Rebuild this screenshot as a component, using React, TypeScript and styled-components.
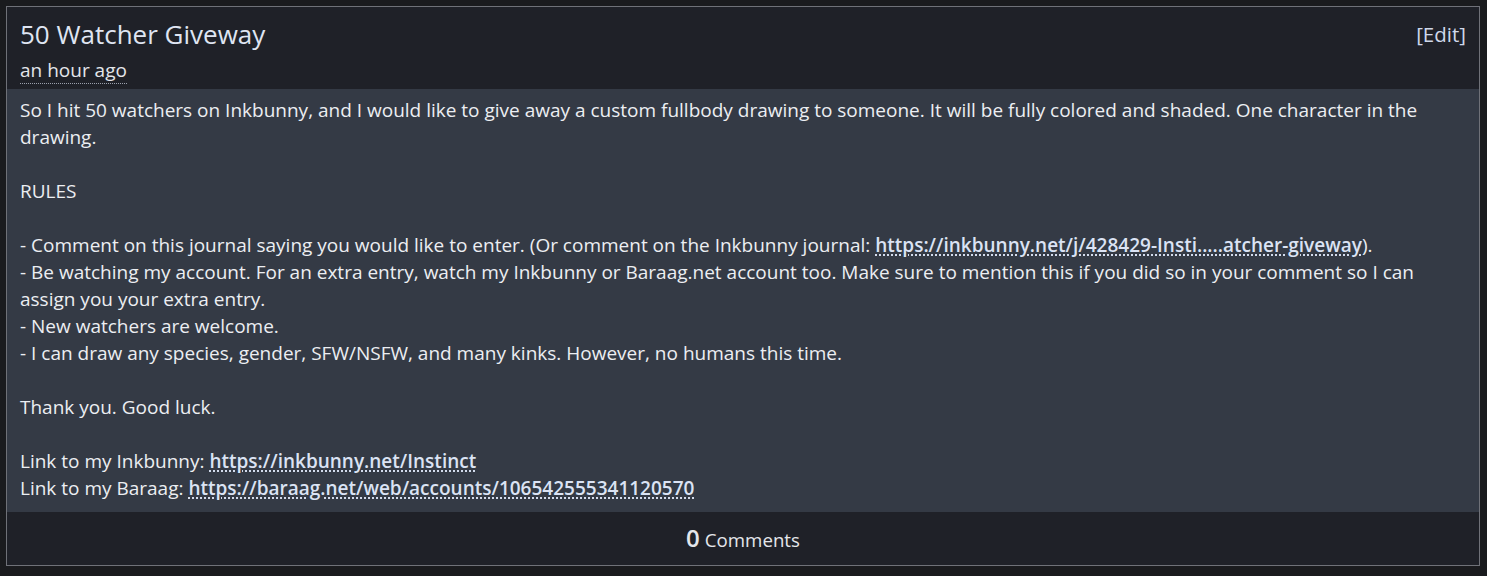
import React from "react";
import styled, { createGlobalStyle } from "styled-components";

const Global = createGlobalStyle`
  html, body { margin: 0; padding: 0; background: #1a1b1e; }
  body { font-family: "Open Sans", "Noto Sans", sans-serif; color: #e4e6eb; }
`;

const Page = styled.div`
  padding: 6px 7px 10px 6px;
`;

const Panel = styled.article`
  border: 1px solid #6f7178;
  background: #1f2128;
  display: flex;
  flex-direction: column;
`;

const Header = styled.header`
  display: flex;
  justify-content: space-between;
  align-items: flex-start;
  padding: 9px 13px 5px 13px;
`;

const TitleBlock = styled.div`
  display: flex;
  flex-direction: column;
`;

const Title = styled.h1`
  margin: 0;
  font-size: 26px;
  font-weight: 400;
  line-height: 36px;
  color: #dfe5f2;
`;

const Time = styled.span`
  align-self: flex-start;
  font-size: 19px;
  line-height: 26px;
  margin-top: 5px;
  color: #e4e6eb;
  border-bottom: 1px dotted #9aa0ad;
`;

const EditLink = styled.a`
  font-size: 20.5px;
  line-height: 30px;
  margin-top: 3px;
  color: #cfd8ea;
  text-decoration: none;
`;

const Body = styled.div`
  background: #343a45;
  padding: 8px 13px 10px 13px;
  font-size: 19px;
  line-height: 27px;
  color: #eceef2;
`;

const Link = styled.a`
  color: #dbe3f4;
  font-weight: 600;
  text-decoration: underline dotted;
  text-underline-offset: 3px;
`;

const Footer = styled.footer`
  display: flex;
  justify-content: center;
  align-items: baseline;
  gap: 5px;
  padding: 11px 0 12px;
  color: #e4e6eb;
`;

const Count = styled.span`
  font-size: 24px;
  font-weight: 600;
  line-height: 30px;
`;

const CountLabel = styled.span`
  font-size: 18.7px;
`;

export default function App() {
  return (
    <>
      <Global />
      <Page>
        <Panel>
          <Header>
            <TitleBlock>
              <Title>50 Watcher Giveway</Title>
              <Time>an hour ago</Time>
            </TitleBlock>
            <EditLink href="#">[Edit]</EditLink>
          </Header>
          <Body>
            So I hit 50 watchers on Inkbunny, and I would like to give away a custom fullbody drawing to someone. It will be fully colored and shaded. One character in the drawing.
            <br />
            <br />
            RULES
            <br />
            <br />
            - Comment on this journal saying you would like to enter. (Or comment on the Inkbunny journal:{" "}
            <Link href="#">https://inkbunny.net/j/428429-Insti.....atcher-giveway</Link>).
            <br />
            - Be watching my account. For an extra entry, watch my Inkbunny or Baraag.net account too. Make sure to mention this if you did so in your comment so I can assign you your extra entry.
            <br />
            - New watchers are welcome.
            <br />
            - I can draw any species, gender, SFW/NSFW, and many kinks. However, no humans this time.
            <br />
            <br />
            Thank you. Good luck.
            <br />
            <br />
            Link to my Inkbunny: <Link href="#">https://inkbunny.net/Instinct</Link>
            <br />
            Link to my Baraag: <Link href="#">https://baraag.net/web/accounts/106542555341120570</Link>
          </Body>
          <Footer>
            <Count>0</Count>
            <CountLabel>Comments</CountLabel>
          </Footer>
        </Panel>
      </Page>
    </>
  );
}
